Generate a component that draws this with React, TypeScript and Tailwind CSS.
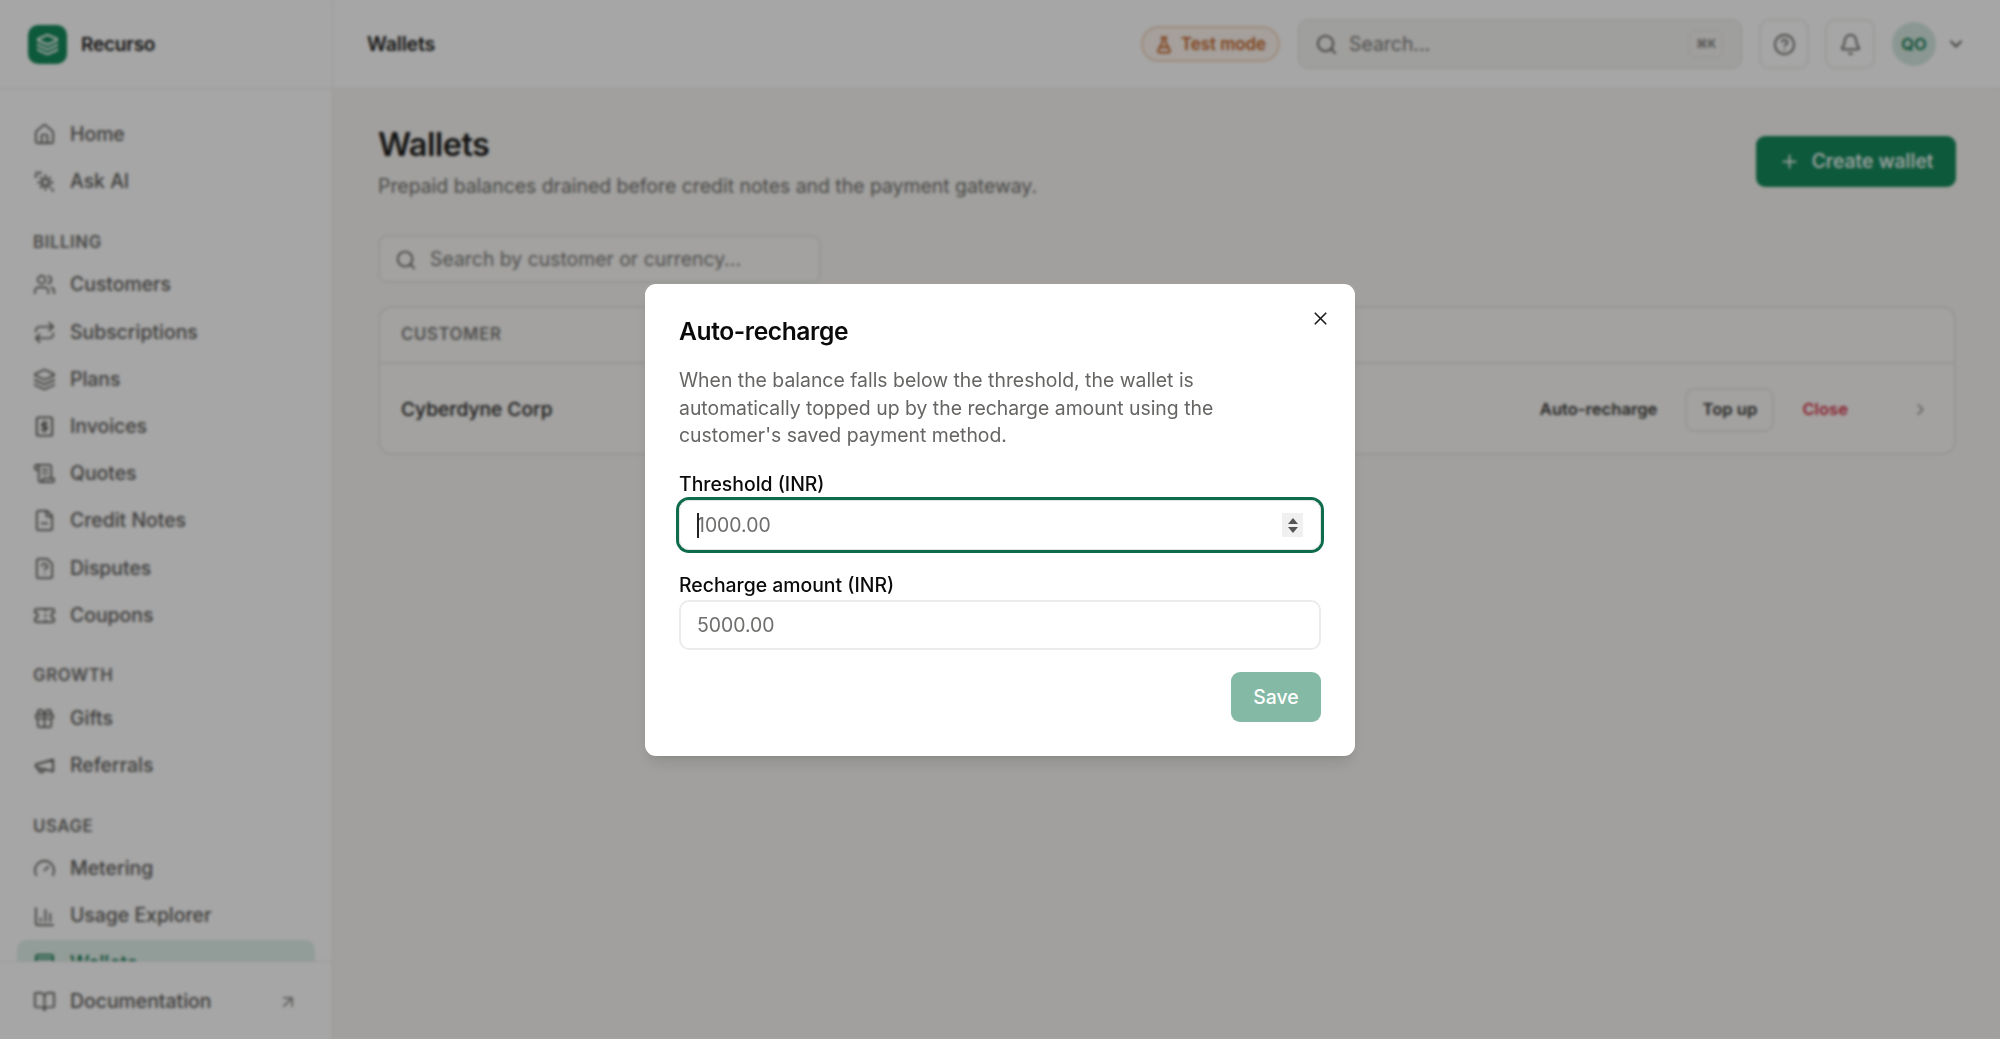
import {
  House, Users, Repeat, Layers, ScrollText, FileMinus, FileQuestionMark, Ticket,
  Gift, Gauge, ChartColumn, WalletCards, BookOpen, ArrowUpRight, Search, CircleHelp, Bell,
  ChevronDown, ChevronRight, Plus, X, FlaskConical,
} from 'lucide-react';

const Sun = ({ className }: { className?: string }) => (
  <svg viewBox="0 0 24 24" fill="none" stroke="currentColor" strokeWidth="2" strokeLinecap="round" className={className}>
    <circle cx="13" cy="13" r="3.5" />
    <path d="M13 5.5v2M13 18.5v2M5.5 13h2M18.5 13h2M8 8l1.2 1.2M16.8 16.8 18 18M18 8l-1.2 1.2M9.2 16.8 8 18" />
    <path d="M4 3v.01M7.5 3v.01M3 6.5v.01M20.5 21v.01" strokeWidth="3" />
  </svg>
);

const InvoiceIcon = ({ className }: { className?: string }) => (
  <svg viewBox="0 0 24 24" fill="none" stroke="currentColor" strokeWidth="2" strokeLinecap="round" strokeLinejoin="round" className={className}>
    <rect x="4" y="2.5" width="16" height="19" rx="2" />
    <path d="M15 8.5h-4a1.75 1.75 0 0 0 0 3.5h2a1.75 1.75 0 0 1 0 3.5H9M12 6.5v11" />
  </svg>
);

const HornIcon = ({ className }: { className?: string }) => (
  <svg viewBox="0 0 24 24" fill="none" stroke="currentColor" strokeWidth="2" strokeLinecap="round" strokeLinejoin="round" className={className}>
    <path d="m3 11 18-5v12L3 14v-3z" />
    <path d="M11.6 16.8a3 3 0 1 1-5.8-1.6" />
  </svg>
);

const groups = [
  { items: [{ label: 'Home', icon: House }, { label: 'Ask AI', icon: Sun }] },
  {
    title: 'BILLING',
    items: [
      { label: 'Customers', icon: Users },
      { label: 'Subscriptions', icon: Repeat },
      { label: 'Plans', icon: Layers },
      { label: 'Invoices', icon: InvoiceIcon },
      { label: 'Quotes', icon: ScrollText },
      { label: 'Credit Notes', icon: FileMinus },
      { label: 'Disputes', icon: FileQuestionMark },
      { label: 'Coupons', icon: Ticket },
    ],
  },
  { title: 'GROWTH', items: [{ label: 'Gifts', icon: Gift }, { label: 'Referrals', icon: HornIcon }] },
  {
    title: 'USAGE',
    items: [
      { label: 'Metering', icon: Gauge },
      { label: 'Usage Explorer', icon: ChartColumn },
      { label: 'Wallets', icon: WalletCards, active: true },
    ],
  },
];

const Sidebar = () => (
  <aside className="w-[333px] shrink-0 h-full flex flex-col bg-white border-r border-[#eceae7]">
    <div className="h-[89px] shrink-0 flex items-center gap-[14px] pl-[28px] border-b border-[#eceae7]">
      <div className="w-[39px] h-[39px] rounded-[10px] bg-[#15895c] flex items-center justify-center text-white">
        <Layers className="w-[23px] h-[23px]" strokeWidth={2.2} />
      </div>
      <span className="pt-[2px] text-[19px] font-semibold text-[#1d1d1b] tracking-[-0.2px]">Recurso</span>
    </div>
    <nav className="flex-1 overflow-hidden px-[17px] pt-[22px]">
      {groups.map((g, i) => (
        <div key={i} className={g.title ? 'mt-[27px]' : ''}>
          {g.title && (
            <div className="h-[20px] mb-[9px] px-[16px] flex items-center text-[16.8px] leading-none font-semibold tracking-[0.6px] text-[#6e6d6a]">
              {g.title}
            </div>
          )}
          {g.items.map((it) => {
            const Icon = it.icon;
            return (
              <div
                key={it.label}
                className={`h-[47.2px] px-[16px] flex items-center gap-[14px] rounded-[10px] text-[19.4px] font-medium ${
                  'active' in it ? 'bg-[#e1f0ea] text-[#137a52]' : 'text-[#5f5e5b]'
                }`}
              >
                <Icon className="w-[23px] h-[23px] shrink-0" strokeWidth={1.8} />
                {it.label}
              </div>
            );
          })}
        </div>
      ))}
    </nav>
    <div className="h-[78px] shrink-0 border-t border-[#eceae7] pt-[2px] px-[33px] flex items-center gap-[14px] text-[19.4px] font-medium text-[#5f5e5b] bg-white">
      <BookOpen className="w-[23px] h-[23px] shrink-0" strokeWidth={1.8} />
      <span className="flex-1">Documentation</span>
      <ArrowUpRight className="w-[20px] h-[20px] text-[#8f8e8b] mr-[1px]" strokeWidth={2} />
    </div>
  </aside>
);

const Topbar = () => (
  <header className="h-[89px] shrink-0 bg-white border-b border-[#eceae7] flex items-center pl-[34px] pr-[34px]">
    <span className="pt-[2px] text-[19.6px] font-semibold text-[#1d1d1b] tracking-[-0.2px] flex-1">Wallets</span>
    <div className="w-[139px] h-[36px] pt-[1px] rounded-full border-2 border-[#f3d8c2] bg-[#fdf6f0] flex items-center justify-center gap-[8px] text-[#c4672c] text-[16.8px] font-semibold">
      <FlaskConical className="w-[18px] h-[18px]" strokeWidth={2.4} />
      Test mode
    </div>
    <div className="ml-[18px] w-[444px] h-[50px] rounded-[10px] bg-[#f5f4f2] border border-[#e6e5e2] flex items-center pl-[16px] pr-[18px] gap-[11px] text-[19.4px] text-[#7a7976]">
      <Search className="w-[23px] h-[23px] text-[#5f5e5b]" strokeWidth={1.9} />
      <span className="flex-1 pt-[2px]">Search...</span>
      <span className="w-[34px] h-[28px] border border-[#e6e5e2] rounded-[6px] flex items-center justify-center text-[12px] font-semibold text-[#7a7976]">⌘K</span>
    </div>
    <button className="ml-[17px] w-[50px] h-[50px] rounded-[10px] border-2 border-[#f0eeeb] bg-white flex items-center justify-center text-[#5f5e5b]">
      <CircleHelp className="w-[23px] h-[23px]" strokeWidth={1.8} />
    </button>
    <button className="ml-[16px] w-[50px] h-[50px] rounded-[10px] border-2 border-[#f0eeeb] bg-white flex items-center justify-center text-[#5f5e5b]">
      <Bell className="w-[23px] h-[23px]" strokeWidth={1.8} />
    </button>
    <div className="ml-[17px] w-[44px] h-[44px] rounded-full bg-[#d5e9e1] text-[#137a52] flex items-center justify-center text-[16.5px] font-semibold">QO</div>
    <ChevronDown className="ml-[10px] w-[20px] h-[20px] text-[#5f5e5b]" strokeWidth={2.2} />
  </header>
);

const Content = () => (
  <div className="pl-[45px] pr-[44px] pt-[36px]">
    <div className="flex justify-between items-start">
      <div>
        <h1 className="text-[32.6px] leading-[38px] font-semibold text-[#1d1d1b] tracking-[-0.6px]">Wallets</h1>
        <p className="mt-[10px] text-[19.4px] leading-[27px] text-[#706f6c]">Prepaid balances drained before credit notes and the payment gateway.</p>
      </div>
      <button className="mt-[11px] w-[200px] h-[51px] rounded-[9px] bg-[#15895c] text-white flex items-center justify-center gap-[12px] text-[19.4px] font-medium">
        <Plus className="w-[21px] h-[21px]" strokeWidth={2} />
        Create wallet
      </button>
    </div>
    <div className="mt-[35px] w-[443px] h-[48px] pt-[2px] rounded-[9px] bg-[#faf9f7] border-2 border-[#e8e7e4] flex items-center pl-[15px] gap-[13px] text-[19.4px] text-[#7a7976]">
      <Search className="w-[22px] h-[22px] text-[#5f5e5b]" strokeWidth={1.9} />
      Search by customer or currency...
    </div>
    <div className="mt-[23px] rounded-[14px] border-2 border-[#e8e7e4] bg-[#faf9f7]">
      <div className="h-[56px] flex items-center px-[21px] border-b-2 border-[#e8e7e4] text-[16.8px] font-semibold tracking-[0.6px] text-[#7a7976]">CUSTOMER</div>
      <div className="h-[89px] pt-[2px] flex items-center pl-[21px] pr-[24px]">
        <span className="flex-1 text-[19.2px] font-medium text-[#2c2b29]">Cyberdyne Corp</span>
        <span className="text-[16.6px] font-semibold text-[#3c3b38]">Auto-recharge</span>
        <button className="ml-[28px] w-[89px] h-[44px] rounded-[9px] border-2 border-[#e8e7e4] bg-[#faf9f7] text-[16.6px] font-semibold text-[#3c3b38]">Top up</button>
        <span className="ml-[28px] text-[16.6px] font-semibold text-[#d6334a]">Close</span>
        <ChevronRight className="ml-[63px] w-[19px] h-[19px] text-[#8f8e8b]" strokeWidth={2} />
      </div>
    </div>
  </div>
);

const Dialog = () => (
  <div className="fixed inset-0 bg-black/35 backdrop-blur-[1.5px] flex items-start justify-center pt-[284px]">
    <div className="relative w-[710px] h-[472px] bg-white rounded-[11px] shadow-lg pt-[30px] px-[34px]">
      <button className="absolute top-[24px] right-[24px] text-[#1a1a1a]">
        <X className="w-[21px] h-[21px]" strokeWidth={1.9} />
      </button>
      <h2 className="text-[24.6px] leading-[34px] font-semibold text-[#0a0a0a] tracking-[-0.4px]">Auto-recharge</h2>
      <p className="mt-[19px] text-[19.4px] leading-[27.7px] text-[#666563]">
        When the balance falls below the threshold, the wallet is<br />
        automatically topped up by the recharge amount using the<br />
        customer's saved payment method.
      </p>
      <label className="block mt-[22px] text-[19.4px] leading-[24px] font-medium text-[#0a0a0a]">Threshold (INR)</label>
      <div className="relative mt-[4px] h-[50px] rounded-[10px] border border-[#e5e5e3] ring-[3px] ring-[#0f6b4d] flex items-center">
        <input placeholder="1000.00" className="w-full h-full px-[17px] bg-transparent outline-none text-[19.4px] placeholder:text-[#6f6e6c]" />
        <span className="absolute left-[17px] top-[12px] w-[2px] h-[25px] bg-[#222]" />
        <span className="absolute right-[17px] top-[12px] w-[21px] h-[24px] bg-[#f0f0f0] flex flex-col items-center justify-center gap-[3px]">
          <span className="w-0 h-0 border-x-[5px] border-x-transparent border-b-[6px] border-b-[#555]" />
          <span className="w-0 h-0 border-x-[5px] border-x-transparent border-t-[6px] border-t-[#555]" />
        </span>
      </div>
      <label className="block mt-[23px] text-[19.4px] leading-[24px] font-medium text-[#0a0a0a]">Recharge amount (INR)</label>
      <div className="mt-[3px] h-[50px] rounded-[10px] border-2 border-[#ececea] flex items-center">
        <input placeholder="5000.00" className="w-full h-full px-[16px] bg-transparent outline-none text-[19.4px] placeholder:text-[#6f6e6c]" />
      </div>
      <div className="mt-[22px] flex justify-end">
        <button className="w-[90px] h-[50px] rounded-[9px] bg-[#84b9a5] text-white text-[19.4px] font-medium">Save</button>
      </div>
    </div>
  </div>
);

export default function App() {
  return (
    <div className="h-screen flex overflow-hidden bg-[#f7f6f3] font-['Inter',sans-serif]">
      <Sidebar />
      <main className="flex-1 min-w-0 flex flex-col">
        <Topbar />
        <Content />
      </main>
      <Dialog />
    </div>
  );
}
